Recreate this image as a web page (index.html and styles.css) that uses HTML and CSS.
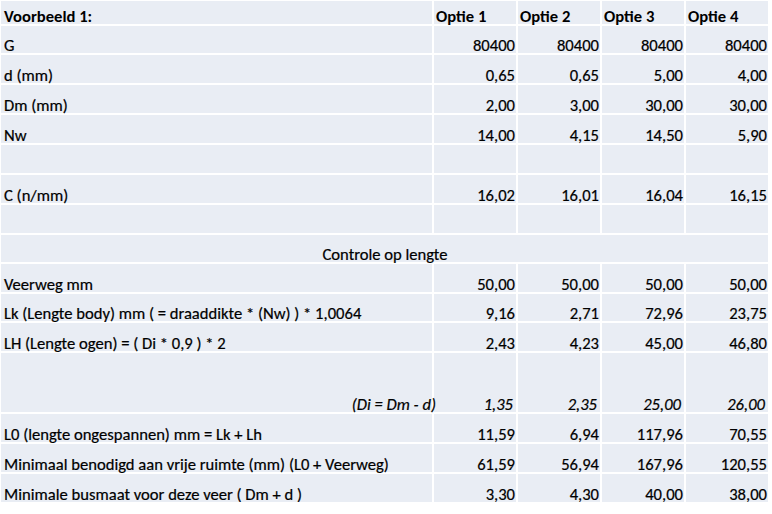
FILE: index.html
```html
<!DOCTYPE html>
<html lang="nl">
<head>
<meta charset="utf-8">
<title>Voorbeeld 1</title>
<link rel="stylesheet" href="styles.css">
</head>
<body>
<div class="sheet">
  <div class="c lbl b">Voorbeeld 1:</div>
  <div class="c hd">Optie 1</div>
  <div class="c hd">Optie 2</div>
  <div class="c hd">Optie 3</div>
  <div class="c hd">Optie 4</div>

  <div class="c lbl">G</div>
  <div class="c num">80400</div><div class="c num">80400</div><div class="c num">80400</div><div class="c num">80400</div>

  <div class="c lbl">d (mm)</div>
  <div class="c num">0,65</div><div class="c num">0,65</div><div class="c num">5,00</div><div class="c num">4,00</div>

  <div class="c lbl">Dm (mm)</div>
  <div class="c num">2,00</div><div class="c num">3,00</div><div class="c num">30,00</div><div class="c num">30,00</div>

  <div class="c lbl">Nw</div>
  <div class="c num">14,00</div><div class="c num">4,15</div><div class="c num">14,50</div><div class="c num">5,90</div>

  <div class="c lbl"></div>
  <div class="c"></div><div class="c"></div><div class="c"></div><div class="c"></div>

  <div class="c lbl">C (n/mm)</div>
  <div class="c num">16,02</div><div class="c num">16,01</div><div class="c num">16,04</div><div class="c num">16,15</div>

  <div class="c lbl"></div>
  <div class="c"></div><div class="c"></div><div class="c"></div><div class="c"></div>

  <div class="c merged">Controle op lengte</div>

  <div class="c lbl">Veerweg mm</div>
  <div class="c num">50,00</div><div class="c num">50,00</div><div class="c num">50,00</div><div class="c num">50,00</div>

  <div class="c lbl">Lk (Lengte body) mm ( = draaddikte * (Nw) ) * 1,0064</div>
  <div class="c num">9,16</div><div class="c num">2,71</div><div class="c num">72,96</div><div class="c num">23,75</div>

  <div class="c lbl">LH (Lengte ogen) = ( Di * 0,9 ) * 2</div>
  <div class="c num">2,43</div><div class="c num">4,23</div><div class="c num">45,00</div><div class="c num">46,80</div>

  <div class="c lbl it right"><span class="spill">(Di = Dm - d)</span></div>
  <div class="c num it">1,35</div><div class="c num it">2,35</div><div class="c num it">25,00</div><div class="c num it">26,00</div>

  <div class="c lbl">L0 (lengte ongespannen) mm = Lk + Lh</div>
  <div class="c num">11,59</div><div class="c num">6,94</div><div class="c num">117,96</div><div class="c num">70,55</div>

  <div class="c lbl">Minimaal benodigd aan vrije ruimte (mm) (L0 + Veerweg)</div>
  <div class="c num">61,59</div><div class="c num">56,94</div><div class="c num">167,96</div><div class="c num">120,55</div>

  <div class="c lbl">Minimale busmaat voor deze veer ( Dm + d )</div>
  <div class="c num">3,30</div><div class="c num">4,30</div><div class="c num">40,00</div><div class="c num">38,00</div>
</div>
</body>
</html>
```

FILE: styles.css
```css
html, body {
  margin: 0;
  padding: 0;
  background: #ffffff;
}

body {
  font-family: Carlito, "Liberation Sans", sans-serif;
  font-size: 16.6px;
  color: #000000;
  -webkit-text-stroke: 0.2px #000000;
}

.sheet {
  display: grid;
  width: 767px;
  margin: 1px 0 0 1px;
  grid-template-columns: 431px repeat(4, 82px);
  grid-template-rows: 23px 27px 28px 28px 28px 28px 28px 28px 27px 28px 27px 28px 59px 28px 28px 28px;
  gap: 2px;
  background: #ffffff;
}

.c {
  background: #e9edf4;
  display: flex;
  align-items: flex-end;
  padding: 0 2px 0 3px;
  line-height: 16px;
  white-space: nowrap;
  overflow: visible;
}

.lbl {
  justify-content: flex-start;
}

.b, .hd {
  font-weight: bold;
  -webkit-text-stroke: 0;
}

.hd {
  padding-left: 2px;
}

.num {
  justify-content: flex-end;
  padding-right: 1px;
}

.it {
  font-style: italic;
}

.num.it {
  padding-right: 3px;
}

.right {
  justify-content: flex-end;
  padding-right: 0;
  z-index: 1;
}

.spill {
  margin-right: -4px;
}

.merged {
  grid-column: 1 / -1;
  justify-content: center;
}
```
